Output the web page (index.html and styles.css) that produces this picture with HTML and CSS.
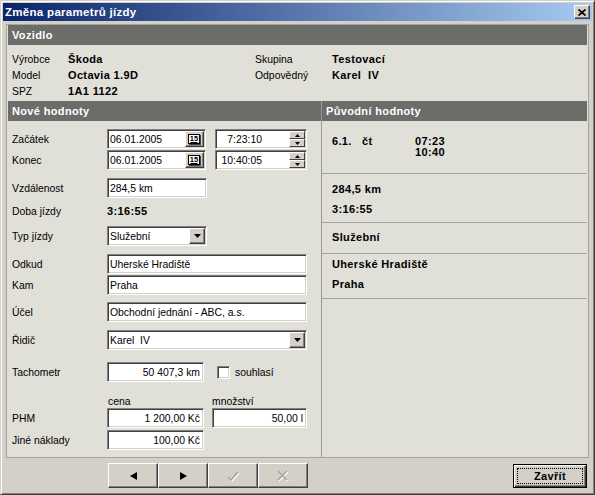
FILE: index.html
```html
<!DOCTYPE html>
<html lang="cs">
<head>
<meta charset="utf-8">
<title>Změna parametrů jízdy</title>
<link rel="stylesheet" href="styles.css">
</head>
<body>
<div class="window">
  <div class="titlebar">
    <span class="title">Změna parametrů jízdy</span>
    <span class="close"><svg width="8" height="7" viewBox="0 0 8 7"><path d="M0.5 0.5L7.5 6.5M7.5 0.5L0.5 6.5" stroke="#000" stroke-width="1.7"/></svg></span>
  </div>
  <div class="panel">
    <div class="hdr">Vozidlo</div>
    <div class="vehicle">
      <span>Výrobce</span><b>Škoda</b><span>Skupina</span><b>Testovací</b>
      <span>Model</span><b>Octavia 1.9D</b><span>Odpovědný</span><b>Karel&nbsp; IV</b>
      <span>SPZ</span><b>1A1 1122</b><span></span><span></span>
    </div>
    <div class="lower">
      <div class="left">
        <div class="hdr">Nové hodnoty</div>
        <div class="row r-start">
          <span class="lbl">Začátek</span>
          <div class="field date"><span class="txt">06.01.2005</span><span class="calbtn"><svg width="13" height="11" viewBox="0 0 13 11"><rect x="0.5" y="0.5" width="11" height="9" fill="#fff" stroke="#000"/><path d="M12.5 1V10.5H1" stroke="#404040" fill="none"/><text x="6" y="7.3" font-size="7.5" font-weight="bold" text-anchor="middle" font-family="Liberation Sans, sans-serif">15</text><path d="M2.5 8.5H9.5" stroke="#000"/></svg></span></div>
          <div class="field time"><span class="ttxt">7:23:10</span><span class="spin"><span class="sbtn"><svg width="5" height="3"><path d="M2.5 0L5 3H0z" fill="#000"/></svg></span><span class="sbtn"><svg width="5" height="3"><path d="M0 0H5L2.5 3z" fill="#000"/></svg></span></span></div>
        </div>
        <div class="row r-1">
          <span class="lbl">Konec</span>
          <div class="field date"><span class="txt">06.01.2005</span><span class="calbtn"><svg width="13" height="11" viewBox="0 0 13 11"><rect x="0.5" y="0.5" width="11" height="9" fill="#fff" stroke="#000"/><path d="M12.5 1V10.5H1" stroke="#404040" fill="none"/><text x="6" y="7.3" font-size="7.5" font-weight="bold" text-anchor="middle" font-family="Liberation Sans, sans-serif">15</text><path d="M2.5 8.5H9.5" stroke="#000"/></svg></span></div>
          <div class="field time"><span class="ttxt">10:40:05</span><span class="spin"><span class="sbtn"><svg width="5" height="3"><path d="M2.5 0L5 3H0z" fill="#000"/></svg></span><span class="sbtn"><svg width="5" height="3"><path d="M0 0H5L2.5 3z" fill="#000"/></svg></span></span></div>
        </div>
        <div class="row r-8">
          <span class="lbl">Vzdálenost</span>
          <div class="field w100">284,5 km</div>
        </div>
        <div class="row r-3">
          <span class="lbl">Doba jízdy</span>
          <b class="val">3:16:55</b>
        </div>
        <div class="row r-5">
          <span class="lbl">Typ jízdy</span>
          <div class="field w100 select"><span class="txt">Služební</span><span class="ddbtn"><svg width="7" height="4"><path d="M0 0H7L3.5 4z" fill="#000"/></svg></span></div>
        </div>
        <div class="row r-8">
          <span class="lbl">Odkud</span>
          <div class="field w200">Uherské Hradiště</div>
        </div>
        <div class="row r-1">
          <span class="lbl">Kam</span>
          <div class="field w200">Praha</div>
        </div>
        <div class="row r-7">
          <span class="lbl">Účel</span>
          <div class="field w200">Obchodní jednání - ABC, a.s.</div>
        </div>
        <div class="row r-8">
          <span class="lbl">Řidič</span>
          <div class="field w200 select"><span class="txt">Karel&nbsp; IV</span><span class="ddbtn"><svg width="7" height="4"><path d="M0 0H7L3.5 4z" fill="#000"/></svg></span></div>
        </div>
        <div class="row r-12">
          <span class="lbl">Tachometr</span>
          <div class="field w97 num">50 407,3 km</div>
          <span class="check"></span>
          <span class="checklbl">souhlasí</span>
        </div>
        <div class="row caps">
          <span class="lbl"></span>
          <span class="cap1">cena</span>
          <span>množství</span>
        </div>
        <div class="row">
          <span class="lbl">PHM</span>
          <div class="field w97 num">1 200,00 Kč</div>
          <div class="field w95 num gap8">50,00 l</div>
        </div>
        <div class="row r-2">
          <span class="lbl">Jiné náklady</span>
          <div class="field w97 num">100,00 Kč</div>
        </div>
      </div>
      <div class="right">
        <div class="hdr">Původní hodnoty</div>
        <div class="blk b1">
          <div class="dt"><span class="day">6.1.&nbsp;&nbsp; čt</span><span class="times">07:23<br>10:40</span></div>
        </div>
        <div class="blk b2"><div>284,5 km</div><div>3:16:55</div></div>
        <div class="blk b3"><div>Služební</div></div>
        <div class="blk b4"><div>Uherské Hradiště</div><div>Praha</div></div>
      </div>
    </div>
  </div>
  <div class="bottom">
    <div class="nav">
      <span class="btn"><svg width="7" height="8"><path d="M7 0V8L0 4z" fill="#000"/></svg></span>
      <span class="btn"><svg width="7" height="8"><path d="M0 0V8L7 4z" fill="#000"/></svg></span>
      <span class="btn"><svg width="14" height="12" viewBox="0 0 14 12"><path d="M2 7L5 10L12 2" stroke="#fff" stroke-width="1.4" fill="none" transform="translate(1 1)"/><path d="M2 7L5 10L12 2" stroke="#a09f9a" stroke-width="1.4" fill="none"/></svg></span>
      <span class="btn"><svg width="13" height="12" viewBox="0 0 13 12"><path d="M1 1L10 10M10 1L1 10" stroke="#fff" stroke-width="1.4" transform="translate(1 1)"/><path d="M1 1L10 10M10 1L1 10" stroke="#a09f9a" stroke-width="1.4"/></svg></span>
    </div>
    <span class="zavrit"><span class="focus">Zavřít</span></span>
  </div>
</div>
</body>
</html>
```

FILE: styles.css
```css
* { box-sizing: border-box; }
body {
  margin: 0;
  background: #d4d0c8;
  font-family: "Liberation Sans", Arial, sans-serif;
  font-size: 10.4px;
  color: #000;
}
b { font-weight: bold; font-size: 11px; letter-spacing: 0.35px; }

.window {
  width: 595px;
  height: 495px;
  border: 1px solid;
  border-color: #d4d0c8 #404040 #404040 #d4d0c8;
  box-shadow: inset 1px 1px #fff, inset -1px -1px #808080;
  padding: 2px;
  background: #d4d0c8;
  display: flex;
  flex-direction: column;
}
.titlebar {
  height: 18px;
  flex: none;
  background: linear-gradient(to right, #0a246a, #a6caf0);
  display: flex;
  align-items: center;
  justify-content: space-between;
  padding: 0 2px 0 2px;
}
.title { color: #fff; font-weight: bold; font-size: 11.5px; letter-spacing: 0.3px; }
.close {
  width: 16px; height: 14px;
  background: #d4d0c8;
  border: 1px solid;
  border-color: #fff #404040 #404040 #fff;
  box-shadow: inset -1px -1px #808080;
  display: flex; align-items: center; justify-content: center;
}

.panel {
  margin: 3px 3px 0 3px;
  height: 434px;
  flex: none;
  border: 1px solid #a4a39e;
  background: #e0dfd8;
  padding: 0 1px;
  display: flex;
  flex-direction: column;
}
.hdr {
  height: 20px;
  flex: none;
  background: #6c6c68;
  color: #fff;
  font-weight: bold;
  font-size: 11px;
  letter-spacing: 0.35px;
  line-height: 20px;
  padding-left: 4px;
}
.vehicle {
  display: grid;
  grid-template-columns: 56px 187px 77px 1fr;
  grid-auto-rows: 16px;
  align-items: center;
  padding: 6px 0 2px 4px;
}
.lower { display: flex; flex: 1; }
.left { width: 313px; flex: none; }
.right { flex: 1; border-left: 1px solid #9c9b97; }

.row { display: flex; align-items: center; height: 20px; padding-left: 4px; }
.row .lbl { width: 95px; flex: none; }
.r-start { margin-top: 8px; }
.r-1 { margin-top: 1px; }
.r-2 { margin-top: 2px; }
.r-3 { margin-top: 3px; }
.r-5 { margin-top: 5px; }
.r-7 { margin-top: 7px; }
.r-8 { margin-top: 8px; }
.r-12 { margin-top: 12px; }
.caps { margin-top: 12px; height: 14px; }
.cap1 { width: 105px; padding-left: 1px; }

.field {
  height: 20px;
  background: #fff;
  border: 1px solid;
  border-color: #808080 #fff #fff #808080;
  box-shadow: inset 1px 1px #404040, inset -1px -1px #d4d0c8;
  display: flex;
  align-items: center;
  padding: 0 2px;
  white-space: nowrap;
  flex: none;
}
.field .txt { flex: 1; }
.date { width: 99px; padding-right: 1px; }
.time { width: 92px; margin-left: 9px; padding: 0 1px 0 2px; }
.ttxt { width: 44px; text-align: right; }
.spin { margin-left: auto; display: flex; flex-direction: column; width: 16px; height: 16px; }
.sbtn {
  height: 8px;
  background: #d4d0c8;
  border: 1px solid;
  border-color: #fff #404040 #404040 #fff;
  display: flex; align-items: center; justify-content: center;
}
.calbtn, .ddbtn {
  width: 19px; height: 16px;
  background: #d4d0c8;
  border: 1px solid;
  border-color: #fff #404040 #404040 #fff;
  box-shadow: inset -1px -1px #808080;
  display: flex; align-items: center; justify-content: center;
}
.ddbtn { width: 16px; }
.select { padding-right: 1px; }
.w100 { width: 100px; }
.w200 { width: 200px; }
.w97 { width: 97px; }
.w95 { width: 95px; }
.gap8 { margin-left: 8px; }
.num { justify-content: flex-end; padding-right: 3px; }
.val { font-size: 11px; }
.check {
  width: 13px; height: 13px;
  margin-left: 13px;
  background: #fff;
  border: 1px solid;
  border-color: #808080 #fff #fff #808080;
  box-shadow: inset 1px 1px #404040, inset -1px -1px #d4d0c8;
}
.checklbl { margin-left: 5px; }

.blk {
  border-bottom: 1px solid #a4a39e;
  padding-left: 10px;
  font-weight: bold;
  font-size: 11px;
  letter-spacing: 0.35px;
  line-height: 20px;
}
.b1 { height: 53px; padding-top: 15px; line-height: 11px; }
.dt { display: flex; }
.day { width: 83px; }
.b2 { height: 49px; padding-top: 5px; }
.b3 { height: 31px; padding-top: 4px; }
.b4 { height: 45px; }

.bottom { display: flex; align-items: center; margin-top: 5px; height: 25px; flex: none; }
.nav { margin-left: 105px; display: flex; }
.btn {
  width: 50px; height: 25px;
  background: #d4d0c8;
  border: 1px solid;
  border-color: #fff #404040 #404040 #fff;
  box-shadow: inset -1px -1px #808080;
  display: flex; align-items: center; justify-content: center;
}
.zavrit {
  margin-left: auto;
  margin-right: 5px;
  width: 74px; height: 24px;
  border: 1px solid #000;
  box-shadow: inset 1px 1px #fff, inset -1px -1px #404040, inset -2px -2px #808080;
  padding: 3px;
  display: flex;
}
.focus {
  flex: 1;
  border: 1px dotted #000;
  display: flex; align-items: center; justify-content: center;
  font-weight: bold; font-size: 11px; letter-spacing: 0.35px;
}
```
